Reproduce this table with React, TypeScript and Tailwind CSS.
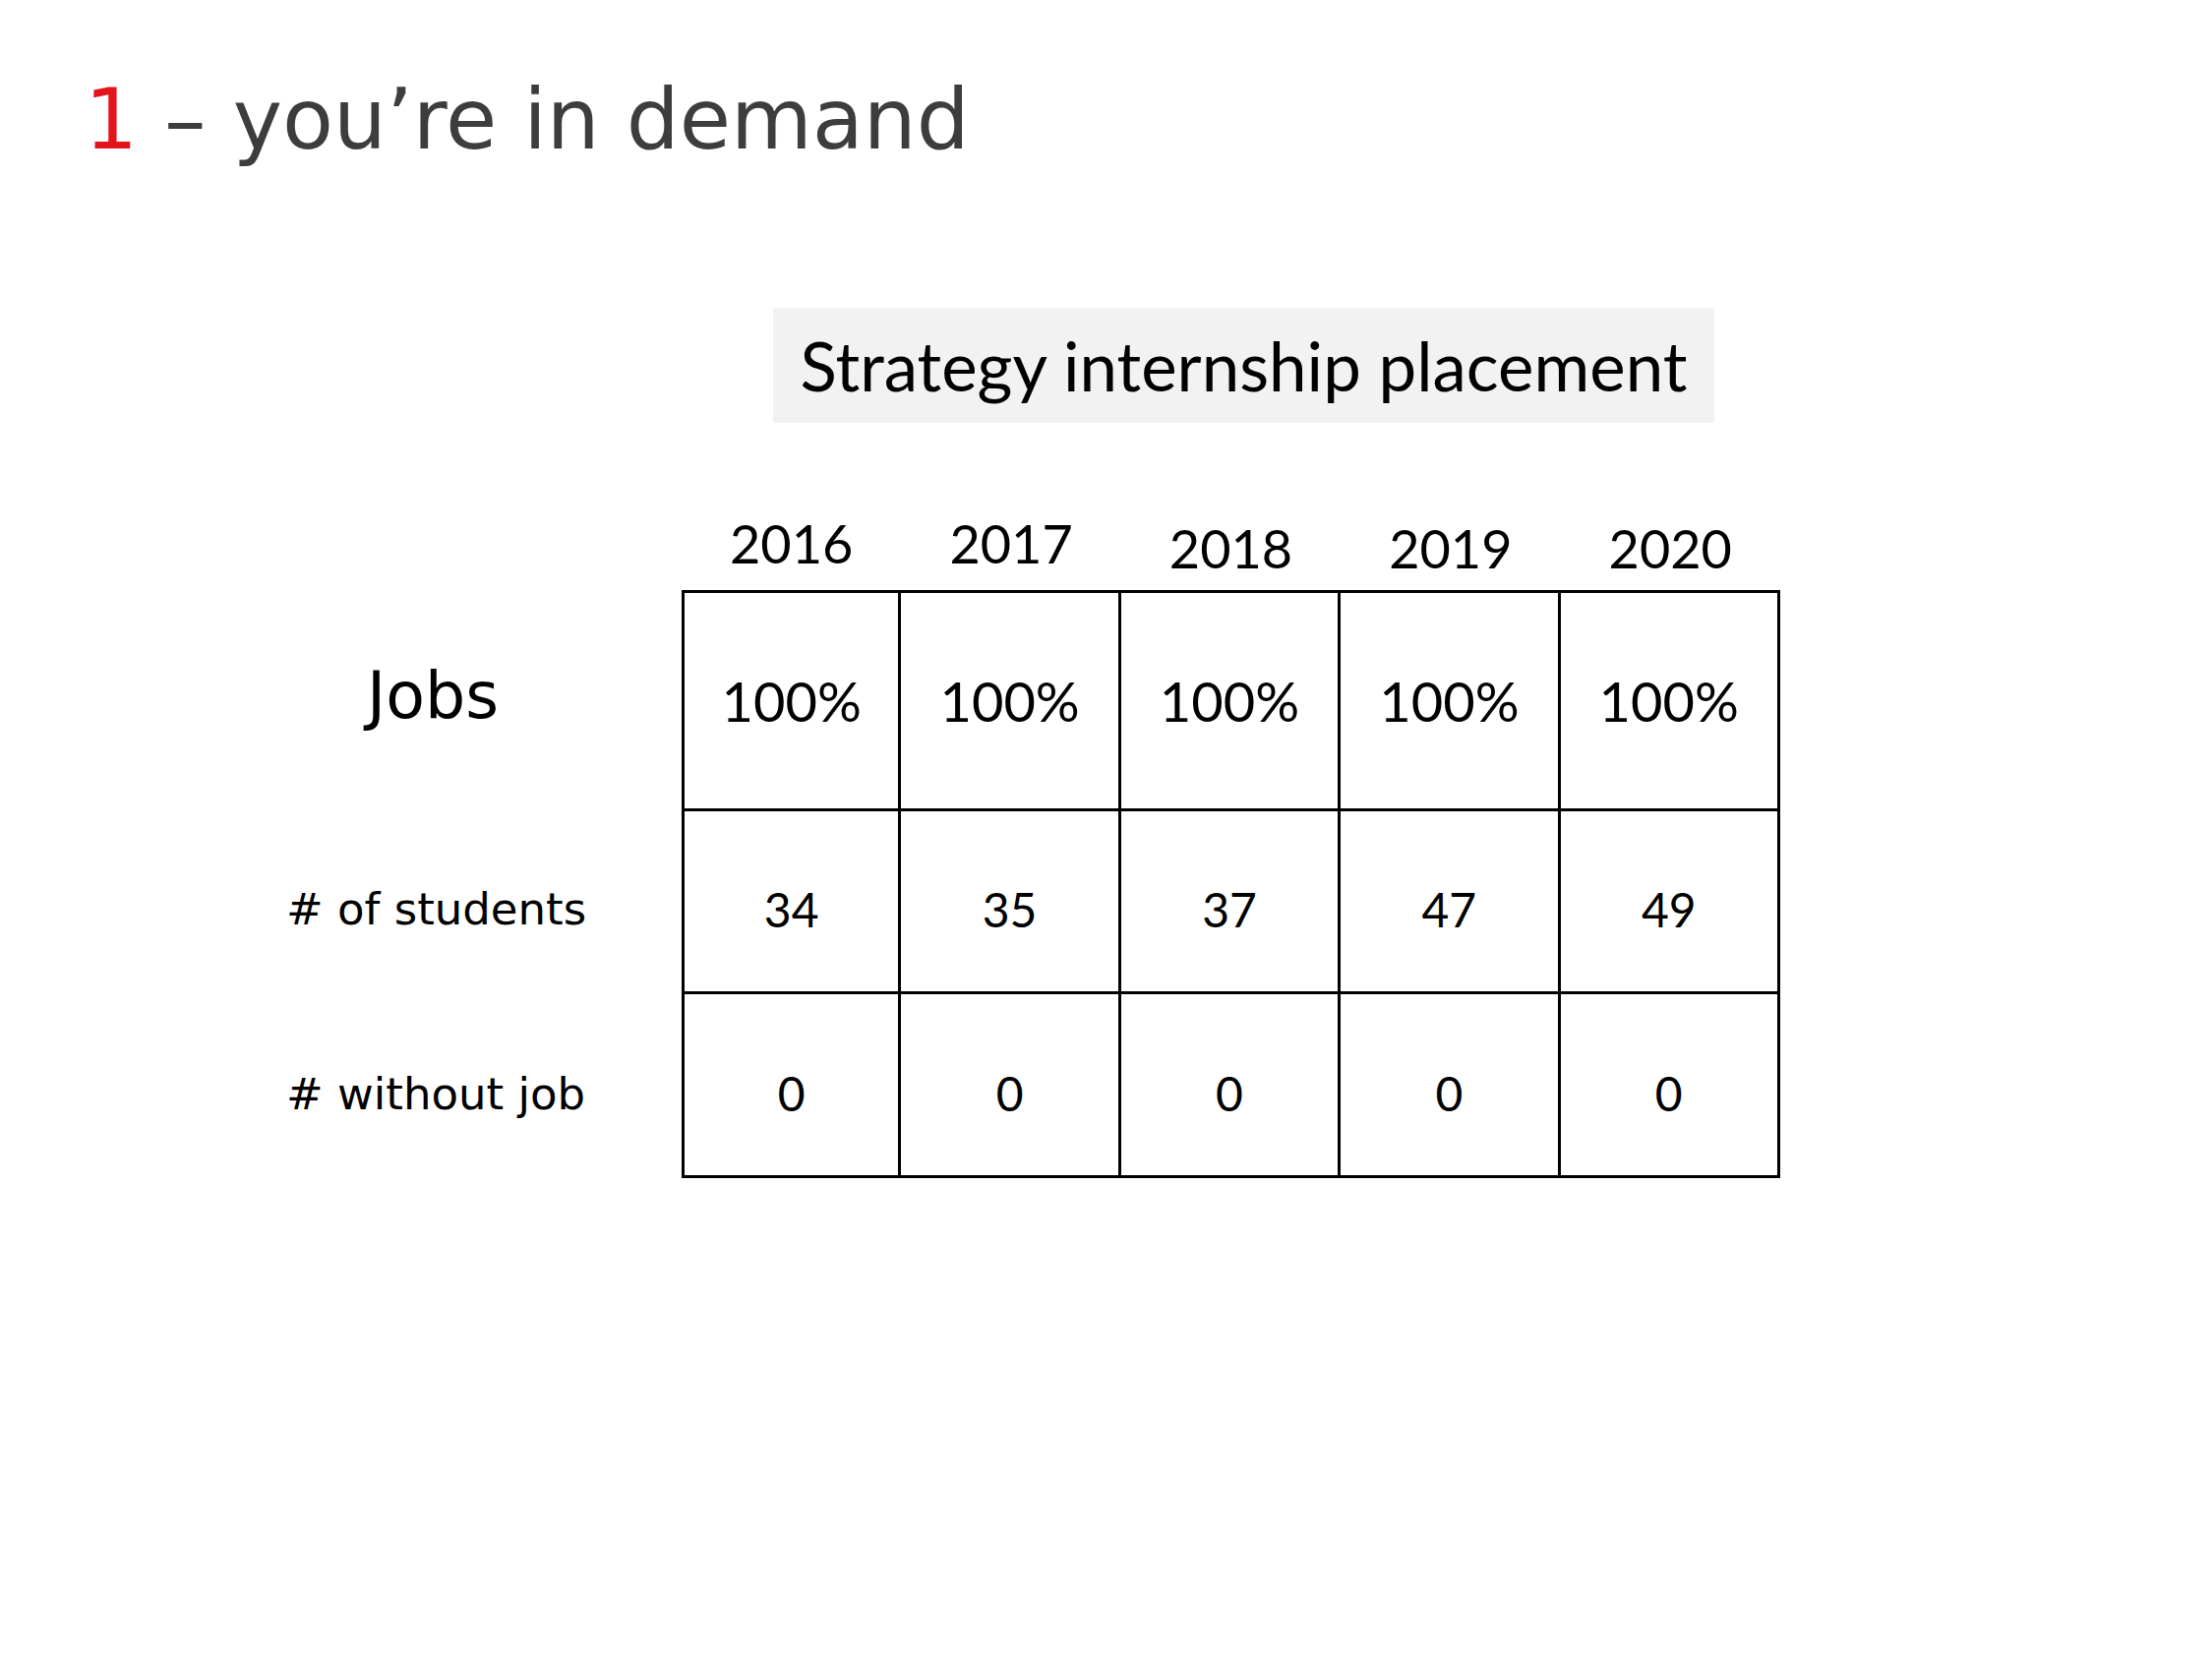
const years = [
  { y: "2016", pb: "pb-[20px]" },
  { y: "2017", pb: "pb-[20px]" },
  { y: "2018", pb: "pb-[15px]" },
  { y: "2019", pb: "pb-[15px]" },
  { y: "2020", pb: "pb-[15px]" },
];

const rows = [
  {
    label: "Jobs",
    labelClass: "pl-[82px] pb-[10px] text-[65px]",
    h: "h-[225px]",
    cellClass: "text-[56px]",
    values: ["100%", "100%", "100%", "100%", "100%"],
  },
  {
    label: "# of students",
    labelClass: "pt-[12px] text-[45px]",
    h: "h-[186px]",
    cellClass: "pt-[16px] text-[48px]",
    values: ["34", "35", "37", "47", "49"],
  },
  {
    label: "# without job",
    labelClass: "pt-[16px] text-[45px]",
    h: "h-[187px]",
    cellClass: "pt-[18px] text-[48px]",
    values: ["0", "0", "0", "0", "0"],
  },
];

export default function App() {
  return (
    <div className="w-[2249px] h-[1687px] bg-white pt-[79px] font-['DejaVu_Sans',sans-serif]">
      <h1 className="pl-[86px] text-[85px] leading-none text-[#3d3d3d] font-normal">
        <span className="text-[#e3141b]">1</span> – you’re in demand
      </h1>

      <div className="pl-[786px] mt-[149px]">
        <div className="w-[957px] h-[117px] bg-[#f2f2f2] flex items-center justify-center font-['Lato',sans-serif] text-[69px] text-black leading-none">
          Strategy internship placement
        </div>
      </div>

      <div className="ml-[291px] mt-[80px] grid grid-cols-[402px_repeat(5,223.4px)] text-black">
        <div className="h-[90px]" />
        {years.map((c) => (
          <div
            key={c.y}
            className={`h-[90px] flex items-end justify-center font-['Lato',sans-serif] text-[54px] leading-none ${c.pb}`}
          >
            {c.y}
          </div>
        ))}

        {rows.map((r, ri) => (
          <>
            <div key={r.label} className={`${r.h} flex items-center leading-none ${r.labelClass}`}>
              {r.label}
            </div>
            {r.values.map((v, i) => (
              <div
                key={r.label + i}
                className={`${r.h} flex items-center justify-center border-black border-r-[3px] border-b-[3px] font-['Lato',sans-serif] leading-none ${
                  i === 0 ? "border-l-[3px]" : ""
                } ${ri === 0 ? "border-t-[3px]" : ""} ${r.cellClass}`}
              >
                {v}
              </div>
            ))}
          </>
        ))}
      </div>
    </div>
  );
}
